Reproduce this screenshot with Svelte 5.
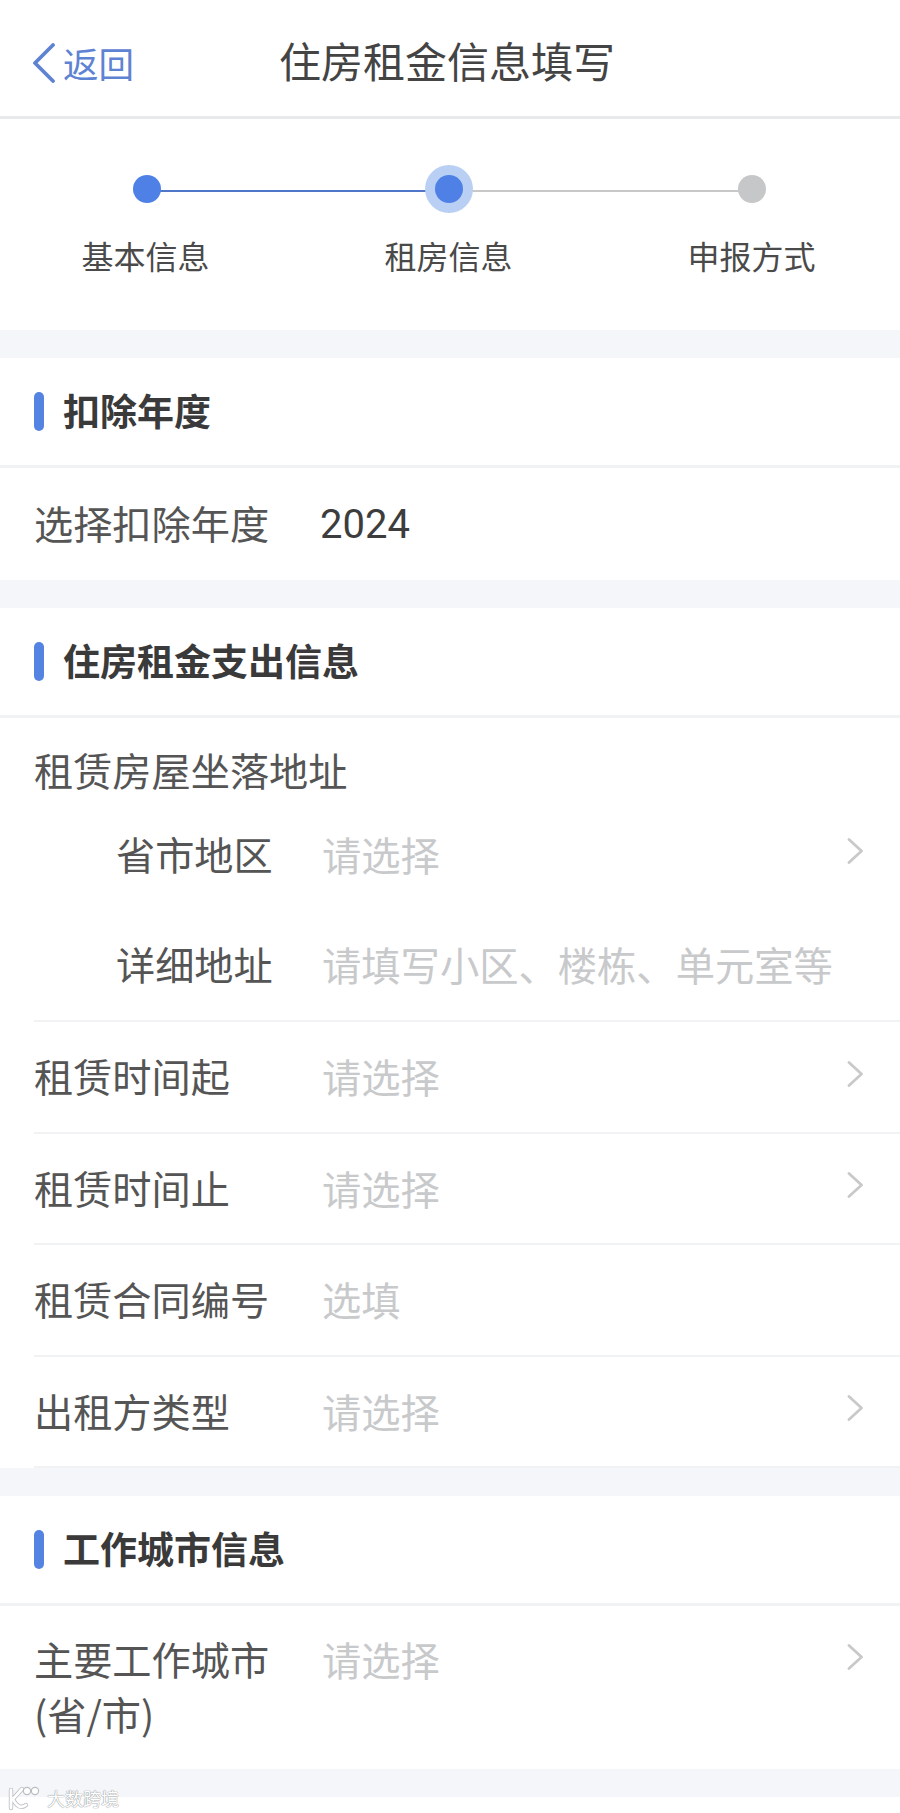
<script>
  const steps = [
    { label: '基本信息', state: 'done' },
    { label: '租房信息', state: 'current' },
    { label: '申报方式', state: 'todo' }
  ];
  const rentRows = [
    { label: '租赁时间起', hint: '请选择', arrow: true },
    { label: '租赁时间止', hint: '请选择', arrow: true },
    { label: '租赁合同编号', hint: '选填', arrow: false },
    { label: '出租方类型', hint: '请选择', arrow: true }
  ];
</script>

{#snippet chevron()}
  <svg class="chevron" width="18" height="26" viewBox="0 0 18 26" aria-hidden="true">
    <path d="M3 1.5 L15.5 13 L3 24.5" fill="none" stroke="#c9c9c9" stroke-width="2.8" stroke-linecap="round" stroke-linejoin="round" />
  </svg>
{/snippet}

<div class="page">
  <header class="nav">
    <div class="nav__back">
      <svg width="24" height="40" viewBox="0 0 24 40" aria-hidden="true">
        <path d="M21 2 L3 20 L21 38" fill="none" stroke="#5f83d3" stroke-width="3.8" stroke-linecap="round" stroke-linejoin="round" />
      </svg>
      <span>返回</span>
    </div>
    <h1 class="nav__title">住房租金信息填写</h1>
  </header>

  <section class="steps">
    <div class="steps__track">
      <span class="steps__line steps__line--done"></span>
      <span class="steps__line"></span>
      {#each steps as step}
        <span class="steps__dot steps__dot--{step.state}"></span>
      {/each}
    </div>
    <div class="steps__labels">
      {#each steps as step}
        <span>{step.label}</span>
      {/each}
    </div>
  </section>

  <section class="card">
    <h2 class="card__head">扣除年度</h2>
    <div class="year">
      <span class="label">选择扣除年度</span>
      <span class="year__value">2024</span>
    </div>
  </section>

  <section class="card">
    <h2 class="card__head">住房租金支出信息</h2>
    <div class="address">
      <div class="address__title label">租赁房屋坐落地址</div>
      <div class="address__row">
        <span class="label address__label">省市地区</span>
        <span class="hint">请选择</span>
        {@render chevron()}
      </div>
      <div class="address__row">
        <span class="label address__label">详细地址</span>
        <span class="hint">请填写小区、楼栋、单元室等</span>
      </div>
    </div>
    {#each rentRows as row}
      <div class="row">
        <span class="label row__label">{row.label}</span>
        <span class="hint">{row.hint}</span>
        {#if row.arrow}
          {@render chevron()}
        {/if}
      </div>
    {/each}
  </section>

  <section class="card">
    <h2 class="card__head">工作城市信息</h2>
    <div class="city">
      <span class="label city__label">主要工作城市<br />(省/市)</span>
      <span class="hint">请选择</span>
      {@render chevron()}
    </div>
  </section>

  <div class="tail"></div>

  <div class="mark">
    <svg width="34" height="26" viewBox="0 0 34 26" aria-hidden="true">
      <path d="M4 5 V23 M15 4 L6 14 C9 21 14 24 19 20" fill="none" stroke="#b9bdc2" stroke-width="4.4" stroke-linecap="round" />
      <path d="M4 5 V23 M15 4 L6 14 C9 21 14 24 19 20" fill="none" stroke="#fff" stroke-width="2.8" stroke-linecap="round" />
      <circle cx="20" cy="6" r="3.6" fill="#fff" stroke="#b9bdc2" stroke-width="1.2" />
      <circle cx="28" cy="6" r="3.6" fill="#fff" stroke="#b9bdc2" stroke-width="1.2" />
    </svg>
    <span>大数跨境</span>
  </div>
</div>

<style>
  :global(body) {
    background: #fff;
    font-family: 'Noto Sans CJK SC', 'Liberation Sans', sans-serif;
  }

  .page {
    height: 1813px;
    overflow: hidden;
    position: relative;
    width: 900px;
  }

  .nav {
    align-items: center;
    border-bottom: 3px solid #e8e9eb;
    box-sizing: border-box;
    display: flex;
    height: 119px;
    justify-content: center;
    padding-top: 3px;
    position: relative;
  }

  .nav__back {
    align-items: center;
    color: #5f83d3;
    display: flex;
    font-size: 35.5px;
    gap: 7px;
    left: 32px;
    position: absolute;
    top: 43px;
  }

  .nav__back span {
    line-height: 38px;
  }

  .nav__title {
    color: #444;
    font-size: 42px;
    font-weight: 400;
    line-height: 56px;
    margin: 0 6px 0 0;
  }

  .steps {
    background: #fff;
    height: 211px;
  }

  .steps__track {
    height: 28px;
    margin: 0 auto;
    padding-top: 56px;
    position: relative;
    width: 606px;
  }

  .steps__line {
    background: #c8c8c8;
    height: 2px;
    left: 302px;
    position: absolute;
    top: 71px;
    width: 303px;
  }

  .steps__line--done {
    background: #4f76c9;
    left: 0;
  }

  .steps__dot {
    background: #4f80e6;
    border-radius: 50%;
    height: 28px;
    position: absolute;
    top: 56px;
    width: 28px;
  }

  .steps__dot--done {
    left: -14px;
  }

  .steps__dot--current {
    box-shadow: 0 0 0 10px #b9d0f4;
    left: 288px;
  }

  .steps__dot--todo {
    background: #c6c7c9;
    left: 591px;
  }

  .steps__labels {
    color: #4a4a4a;
    display: grid;
    font-size: 32px;
    grid-template-columns: repeat(3, 303px);
    justify-items: center;
    line-height: 44px;
    margin: 30px 0 0 -6px;
  }

  .card {
    background: #fff;
    border-top: 28px solid #f5f6f9;
  }

  .card__head {
    align-items: center;
    border-bottom: 3px solid #f1f2f4;
    box-sizing: border-box;
    color: #3a3a3a;
    display: flex;
    font-size: 37px;
    font-weight: 700;
    gap: 19px;
    height: 110px;
    line-height: 50px;
    margin: 0;
    padding: 0 0 4px 34px;
  }

  .card__head::before {
    background: #5583e2;
    border-radius: 5px;
    content: '';
    height: 39px;
    margin-top: 4px;
    width: 10px;
  }

  .label {
    color: #555;
    font-size: 39.2px;
    line-height: 55px;
  }

  .hint {
    color: #c8c9cb;
    font-size: 39.3px;
    line-height: 55px;
    white-space: nowrap;
  }

  .chevron {
    flex: none;
    margin-left: auto;
  }

  .year {
    align-items: center;
    box-sizing: border-box;
    display: flex;
    height: 112px;
    padding: 0 0 4px 34px;
  }

  .year .label {
    width: 286px;
  }

  .year__value {
    color: #3d3d3d;
    font-family: 'Roboto', 'Liberation Sans', sans-serif;
    font-size: 40px;
    margin-top: 4px;
  }

  .address {
    border-bottom: 2px solid #f1f2f4;
    box-sizing: border-box;
    height: 304px;
    margin-left: 34px;
    padding-top: 24px;
  }

  .address__row {
    align-items: center;
    display: flex;
    height: 110px;
    padding-right: 36px;
  }

  .address__row .chevron {
    margin-bottom: 5px;
  }

  .address__title {
    height: 55px;
    margin-bottom: 1px;
  }

  .address__label {
    flex: none;
    padding-left: 82px;
    width: 206px;
  }

  .row {
    align-items: center;
    border-bottom: 2px solid #f1f2f4;
    box-sizing: border-box;
    display: flex;
    height: 111.5px;
    margin-left: 34px;
    padding-bottom: 2px;
    padding-right: 36px;
  }

  .row .chevron {
    margin-bottom: 4px;
  }

  .row__label {
    width: 288px;
  }

  .city {
    align-items: flex-start;
    box-sizing: border-box;
    display: flex;
    height: 162.5px;
    padding: 25px 36px 0 34px;
  }

  .city__label {
    width: 288px;
  }

  .city .chevron {
    margin-top: 13px;
  }

  .tail {
    background: #f5f6f9;
    height: 28px;
  }

  .mark {
    align-items: center;
    color: #fff;
    display: flex;
    font-size: 18px;
    gap: 6px;
    left: 7px;
    line-height: 26px;
    position: absolute;
    text-shadow: 0 0 1px #8a8e93, 0 0 1px #8a8e93;
    top: 1785px;
  }
</style>
